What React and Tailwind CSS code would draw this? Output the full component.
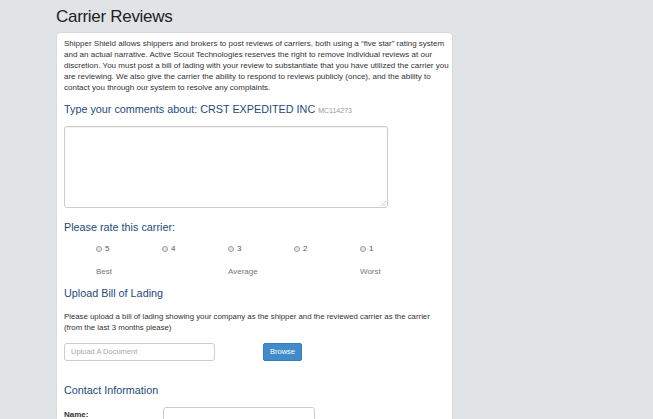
export default function App() {
  const ratings = ["5", "4", "3", "2", "1"];
  return (
    <div
      className="min-h-[419px] w-full bg-[#e0e4e7] overflow-hidden"
      style={{ fontFamily: '"Liberation Sans", Arial, sans-serif' }}
    >
      <div className="ml-[56px] w-[397px]">
        <h1 className="pt-[7px] h-[32px] text-[17px] leading-[20px] tracking-[-0.3px] text-[#222]">
          Carrier Reviews
        </h1>
        <div className="bg-white border border-[#d6dadd] rounded-[4px] min-h-[400px] px-[7px] pt-[5px] pb-4">
          <p className="text-[8px] leading-[11px] text-[#333] whitespace-nowrap">
            Shipper Shield allows shippers and brokers to post reviews of carriers, both using a “five star” rating system
            <br />
            and an actual narrative. Active Scout Technologies reserves the right to remove individual reviews at our
            <br />
            discretion. You must post a bill of lading with your review to substantiate that you have utilized the carrier you
            <br />
            are reviewing. We also give the carrier the ability to respond to reviews publicly (once), and the ability to
            <br />
            contact you through our system to resolve any complaints.
          </p>

          <h2 className="mt-[9px] text-[10.8px] leading-[14px] text-[#254a7c] whitespace-nowrap">
            Type your comments about: CRST EXPEDITED INC{" "}
            <span className="text-[7px] text-[#9a9a9a]">MC114273</span>
          </h2>

          <div className="relative mt-[8px] w-[324px] h-[82px]">
            <textarea className="block w-full h-full resize-none border border-[#cccccc] rounded-[3px] shadow-[inset_0_1px_1px_rgba(0,0,0,0.06)] outline-none" />
            <svg
              className="absolute right-[2px] bottom-[2px]"
              width="6"
              height="6"
              viewBox="0 0 6 6"
            >
              <path d="M6 1 L1 6 M6 3.5 L3.5 6" stroke="#c4c4c4" strokeWidth="0.8" />
            </svg>
          </div>

          <h2 className="mt-[12px] text-[10.8px] leading-[14px] text-[#254a7c]">
            Please rate this carrier:
          </h2>

          <div className="mt-[9px] ml-[32px] grid grid-cols-[66px_66px_66px_66px_66px] text-[8px] leading-[11px] text-[#555]">
            {ratings.map((r) => (
              <div key={r} className="flex items-center gap-[3px]">
                <span className="inline-block w-[6px] h-[6px] rounded-full border border-[#a0a0a0] bg-[#e6e6e6]" />
                <span>{r}</span>
              </div>
            ))}
          </div>

          <div className="mt-[12px] ml-[32px] grid grid-cols-[132px_132px_66px] text-[8px] leading-[11px] text-[#777]">
            <span>Best</span>
            <span>Average</span>
            <span>Worst</span>
          </div>

          <h2 className="mt-[9px] text-[10.8px] leading-[14px] text-[#254a7c]">
            Upload Bill of Lading
          </h2>

          <p className="mt-[11px] text-[7.8px] leading-[11px] text-[#333] whitespace-nowrap">
            Please upload a bill of lading showing your company as the shipper and the reviewed carrier as the carrier
            <br />
            (from the last 3 months please)
          </p>

          <div className="mt-[10px] flex items-center">
            <div className="w-[151px] h-[18px] border border-[#cccccc] rounded-[3px] flex items-center pl-[6px] text-[7.5px] text-[#aaaaaa]">
              Upload A Document
            </div>
            <button className="ml-[48px] w-[39px] h-[18px] bg-[#428bca] border border-[#357ebd] rounded-[2px] text-white text-[7.5px] flex items-center justify-center">
              Browse
            </button>
          </div>

          <h2 className="mt-[22px] text-[10.8px] leading-[14px] text-[#254a7c]">
            Contact Information
          </h2>

          <div className="mt-[10px] flex items-start">
            <span className="w-[99px] pt-[2px] text-[8px] leading-[11px] font-bold text-[#333]">
              Name:
            </span>
            <div className="w-[152px] h-[18px] border border-[#cccccc] rounded-[3px]" />
          </div>
        </div>
      </div>
    </div>
  );
}
